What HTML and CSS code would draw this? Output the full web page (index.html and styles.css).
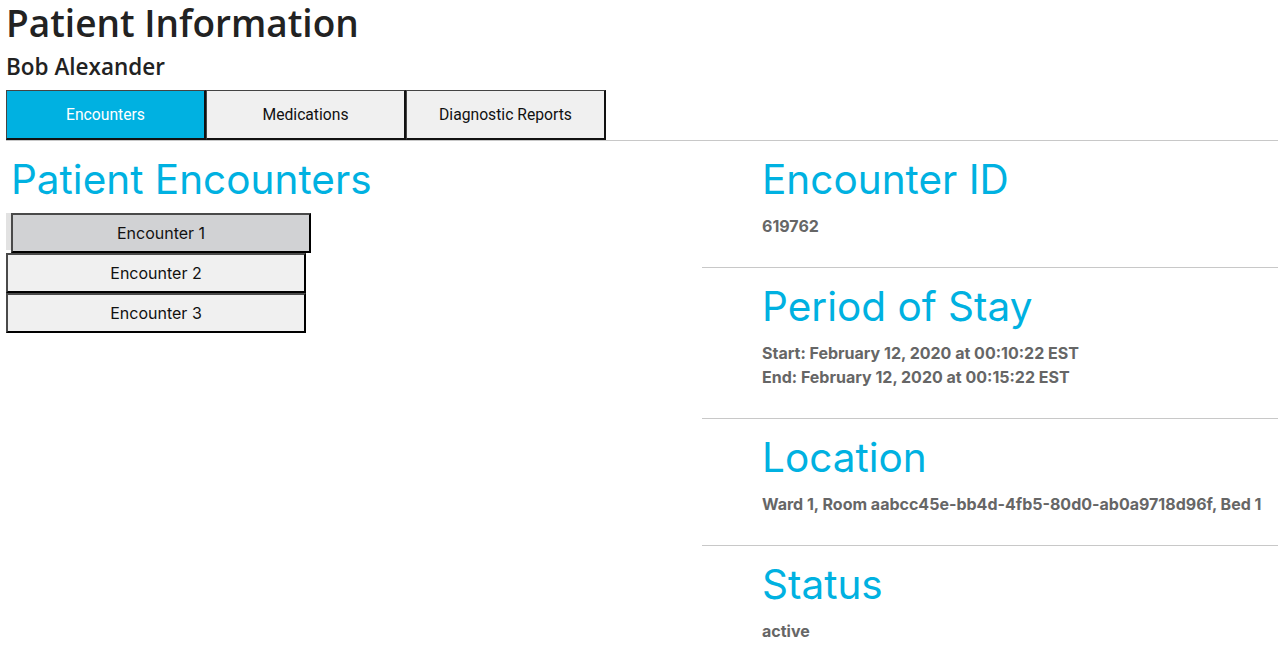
FILE: index.html
```html
<!DOCTYPE html>
<html lang="en">
<head>
<meta charset="utf-8">
<title>Patient Information</title>
<link rel="stylesheet" href="styles.css">
</head>
<body>
<div class="page">
  <h1 class="title">Patient Information</h1>
  <h2 class="name">Bob Alexander</h2>
  <nav class="tabs">
    <button class="tab tab-active">Encounters</button>
    <button class="tab">Medications</button>
    <button class="tab">Diagnostic Reports</button>
  </nav>
  <main class="content">
    <section class="left">
      <h2 class="section-title">Patient Encounters</h2>
      <div class="enc-list">
        <div class="enc-slot enc-slot-active"><button class="enc enc-active">Encounter 1</button></div>
        <div class="enc-slot"><button class="enc">Encounter 2</button></div>
        <div class="enc-slot"><button class="enc">Encounter 3</button></div>
      </div>
    </section>
    <section class="right">
      <div class="item">
        <h2 class="item-title">Encounter ID</h2>
        <div class="item-value">619762</div>
      </div>
      <div class="item">
        <h2 class="item-title">Period of Stay</h2>
        <div class="item-value">Start: February 12, 2020 at 00:10:22 EST</div>
        <div class="item-value">End: February 12, 2020 at 00:15:22 EST</div>
      </div>
      <div class="item">
        <h2 class="item-title">Location</h2>
        <div class="item-value">Ward 1, Room aabcc45e-bb4d-4fb5-80d0-ab0a9718d96f, Bed 1</div>
      </div>
      <div class="item">
        <h2 class="item-title">Status</h2>
        <div class="item-value">active</div>
      </div>
    </section>
  </main>
</div>
</body>
</html>
```

FILE: styles.css
```css
* { box-sizing: border-box; }
html, body { margin: 0; padding: 0; background: #fff; }
body { font-family: "Open Sans", "Noto Sans", sans-serif; color: #222; }

.page { padding: 0 0 0 6px; }

.title {
  margin: 0;
  font-family: "Open Sans", sans-serif;
  font-size: 37px;
  line-height: 46px;
  font-weight: 600;
  color: #222;
  padding-left: 0;
}
.name {
  margin: 6px 0 0 0;
  font-family: "Open Sans", sans-serif;
  font-size: 22.5px;
  line-height: 30px;
  font-weight: 600;
  color: #222;
  padding-left: 0;
}

.tabs {
  display: flex;
  margin-top: 8px;
  border-bottom: 1px solid #c8c8c8;
}
.tab {
  width: 200px;
  height: 50px;
  margin: 0;
  padding: 0;
  font-family: Roboto, sans-serif;
  font-size: 15.7px;
  color: #111;
  background: #f0f0f0;
  border-style: solid;
  border-width: 1px 2px 2px 1px;
  border-color: #444 #111 #111 #444;
  cursor: pointer;
}
.tab-active { background: #00b1e1; color: #fff; }

.content {
  display: grid;
  grid-template-columns: 1fr 576px;
}

.left { padding-top: 15px; }
.section-title, .item-title {
  margin: 0;
  font-family: Inter, sans-serif;
  font-size: 40.5px;
  line-height: 48px;
  font-weight: 400;
  color: #00b1e1;
}
.section-title { padding-left: 5px; }

.enc-list { margin-top: 9px; display: flex; flex-direction: column; }
.enc-slot { display: flex; }
.enc-slot-active { padding-left: 5px; background: linear-gradient(#e2e2e2, #e2e2e2) no-repeat 0 0 / 5px 37px; }
.enc {
  width: 300px;
  height: 40px;
  margin: 0;
  padding: 0;
  font-family: Inter, sans-serif;
  font-size: 16px;
  color: #111;
  background: #f0f0f0;
  border-style: solid;
  border-width: 2px;
  border-color: #4a4a4a #000 #000 #4a4a4a;
  cursor: pointer;
}
.enc-active { background: #d1d2d4; }

.item { padding: 15px 0 29px 60px; }
.item + .item { border-top: 1px solid #c8c8c8; }
.item-title { margin-bottom: 10px; }
.item-value {
  font-family: Inter, sans-serif;
  font-size: 16px;
  line-height: 24px;
  font-weight: 700;
  color: #666;
}
```
